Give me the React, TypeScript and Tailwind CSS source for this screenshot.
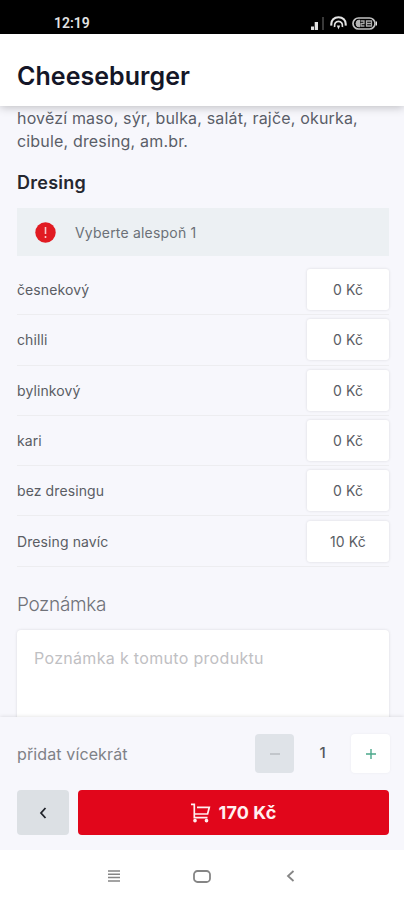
import type { ReactNode } from "react";

interface Option {
  name: string;
  price: string;
}

const options: Option[] = [
  { name: "česnekový", price: "0 Kč" },
  { name: "chilli", price: "0 Kč" },
  { name: "bylinkový", price: "0 Kč" },
  { name: "kari", price: "0 Kč" },
  { name: "bez dresingu", price: "0 Kč" },
  { name: "Dresing navíc", price: "10 Kč" },
];

const StatusBar = () => (
  <div className="flex h-[34px] shrink-0 items-center justify-between bg-black pt-3 pr-[27px] pl-[54px] text-[#e4e4e4]">
    <span className="font-['Roboto'] text-[14px] leading-none font-semibold">12:19</span>
    <div className="flex items-center">
      {/* Signal */}
      <svg width="14" height="13" viewBox="0 0 14 13" fill="currentColor">
        <rect x="0" y="9.5" width="3" height="3.5" />
        <rect x="3.7" y="5" width="3.3" height="8" />
        <rect x="11" y="0" width="2" height="13" opacity="0.25" />
      </svg>
      {/* Hotspot */}
      <svg className="ml-[5px]" width="17" height="14" viewBox="0 0 17 14" fill="none" stroke="currentColor" strokeWidth="2.1">
        <path d="M1.4 9.6C-.2 -1.6 17.2 -1.6 15.6 9.6" />
        <path d="M4.6 11C3.2 3.4 13.8 3.4 12.4 11" strokeWidth="1.8" />
        <path d="M8.5 13.6L6.8 9.6h3.4z" fill="currentColor" stroke="none" />
      </svg>
      {/* Battery */}
      <svg className="ml-[5px]" width="25" height="13" viewBox="0 0 25 13" fill="none" stroke="currentColor">
        <rect x="1" y="1" width="22" height="11" rx="5.5" strokeWidth="1.7" opacity="0.85" />
        <path d="M24.4 4.5v4" strokeWidth="1.2" />
        <path d="M7.5 3A3.5 3.5 0 0 0 7.5 10z" fill="currentColor" opacity="0.8" />
        <path d="M8.5 4h3.5v2.5H9V9h3.5M14.5 4h5v5h-5zM14.5 6.5h5" strokeWidth="1.3" opacity="0.75" />
      </svg>
    </div>
  </div>
);

const OptionRow = ({ name, price }: Option) => (
  <div className="flex h-[50.3px] items-center justify-between border-b border-[#ededf0]">
    <span className="text-[14px] tracking-[0.1px] text-[#5a5d64]">{name}</span>
    <span className="flex h-[41px] w-[82px] items-center justify-center rounded-[3px] bg-white text-[14px] tracking-[0.1px] text-[#5a5d64] shadow-[0_0_3px_rgba(0,0,0,0.12)]">
      {price}
    </span>
  </div>
);

const StepButton = ({ children, className = "" }: { children: ReactNode; className?: string }) => (
  <button className={`flex h-[39px] w-[39px] items-center justify-center rounded-[4px] ${className}`}>{children}</button>
);

export default function App() {
  return (
    <div className="flex h-[900px] w-[404px] flex-col overflow-hidden bg-[#f7f7fc] font-['Inter',sans-serif]">
      <StatusBar />

      <header className="relative z-10 flex h-[72px] shrink-0 items-center bg-white pt-3 pl-[17px] shadow-[0_1px_9px_rgba(0,0,0,0.25)]">
        <h1 className="text-[25px] leading-none font-semibold tracking-[0.05px] text-[#141627]">Cheeseburger</h1>
      </header>

      <main className="min-h-0 flex-1 overflow-hidden pt-px pr-[15px] pl-[17px]">
        <p className="text-[16px] leading-[23px] tracking-[0.17px] text-[#5a5e68]">
          hovězí maso, sýr, bulka, salát, rajče, okurka,
          <br />
          cibule, dresing, am.br.
        </p>

        <h2 className="mt-[18px] text-[18px] leading-6 font-semibold tracking-[0.25px] text-[#25272f]">Dresing</h2>

        <div className="mt-[13px] flex h-12 items-center bg-[#ecf0f3] pl-[18px]">
          <svg width="21" height="21" viewBox="0 0 21 21">
            <circle cx="10.5" cy="10.5" r="10.2" fill="#e11b22" />
            <path d="M10.5 5v7M10.5 14v2" stroke="#f9c8ca" strokeWidth="1.6" />
          </svg>
          <span className="ml-[19px] text-[14px] tracking-[0.2px] text-[#6b7077]">Vyberte alespoň 1</span>
        </div>

        <div className="mt-[9px]">
          {options.map((option) => (
            <OptionRow key={option.name} {...option} />
          ))}
        </div>

        <h3 className="mt-[26px] text-[19px] leading-6 font-light tracking-[-0.35px] text-[#707279]">Poznámka</h3>
        <div className="mt-[13px] h-[120px] rounded-[4px] bg-white px-[17px] pt-4 text-[16px] leading-6 tracking-[0.32px] text-[#bfc0c3] shadow-[0_0_3px_rgba(0,0,0,0.12)]">
          Poznámka k tomuto produktu
        </div>
      </main>

      <footer className="relative z-10 h-[133px] shrink-0 bg-[#f7f7fc] pt-[17px] pr-[15px] pl-[17px] shadow-[0_0_4px_rgba(0,0,0,0.14)]">
        <div className="flex items-center justify-between">
          <span className="text-[16px] tracking-[0.12px] text-[#7f8187]">přidat vícekrát</span>
          <div className="-mr-px flex items-center">
            <StepButton className="bg-[#dfe3e8]">
              <svg width="12" height="12" viewBox="0 0 12 12" stroke="#b2b7bc" strokeWidth="1.3">
                <path d="M1 6h10" />
              </svg>
            </StepButton>
            <span className="w-[57px] text-center text-[15px] font-medium text-[#55575d]">1</span>
            <StepButton className="bg-white shadow-[0_0_3px_rgba(0,0,0,0.05)]">
              <svg width="12" height="12" viewBox="0 0 12 12" stroke="#4ba88b" strokeWidth="1.4">
                <path d="M1 6h10M6 1v10" />
              </svg>
            </StepButton>
          </div>
        </div>

        <div className="mt-[17px] flex gap-[9px]">
          <button className="flex h-[45px] w-[52px] items-center justify-center rounded-[4px] bg-[#dce0e4]">
            <svg width="8" height="12" viewBox="0 0 8 12" fill="none" stroke="#20232a" strokeWidth="1.8">
              <path d="M6.5 1L2 6l4.5 5" />
            </svg>
          </button>
          <button className="flex h-[45px] flex-1 items-center justify-center rounded-[4px] bg-[#e1061b] text-[18px] font-bold tracking-[0.1px] text-[#fff0f0]">
            <svg className="mr-2" width="20" height="20" viewBox="0 0 20 20" fill="none" stroke="currentColor" strokeWidth="1.7">
              <path d="M0 1.3h3.3v13.4H16.5M6 4.3H18.3L16.6 11H3.3" />
              <circle cx="4" cy="17.6" r="1" />
              <circle cx="15.5" cy="17.6" r="1" />
            </svg>
            170 Kč
          </button>
        </div>
      </footer>

      <nav className="relative z-20 flex h-[50px] shrink-0 items-center bg-white pt-0.5 pl-[108px] text-[#858585]">
        <svg width="12" height="12" viewBox="0 0 12 12" stroke="currentColor" strokeWidth="1.5">
          <path d="M0 1h12M0 4.3h12M0 7.6h12M0 11h12" />
        </svg>
        <svg className="ml-[73px]" width="18" height="13" viewBox="0 0 18 13" fill="none" stroke="currentColor" strokeWidth="1.8">
          <rect x="1" y="1" width="16" height="11" rx="3.5" />
        </svg>
        <svg className="ml-[75px]" width="9" height="12" viewBox="0 0 9 12" fill="none" stroke="currentColor" strokeWidth="1.8">
          <path d="M7.5 1L2 6l5.5 5" />
        </svg>
      </nav>
    </div>
  );
}
